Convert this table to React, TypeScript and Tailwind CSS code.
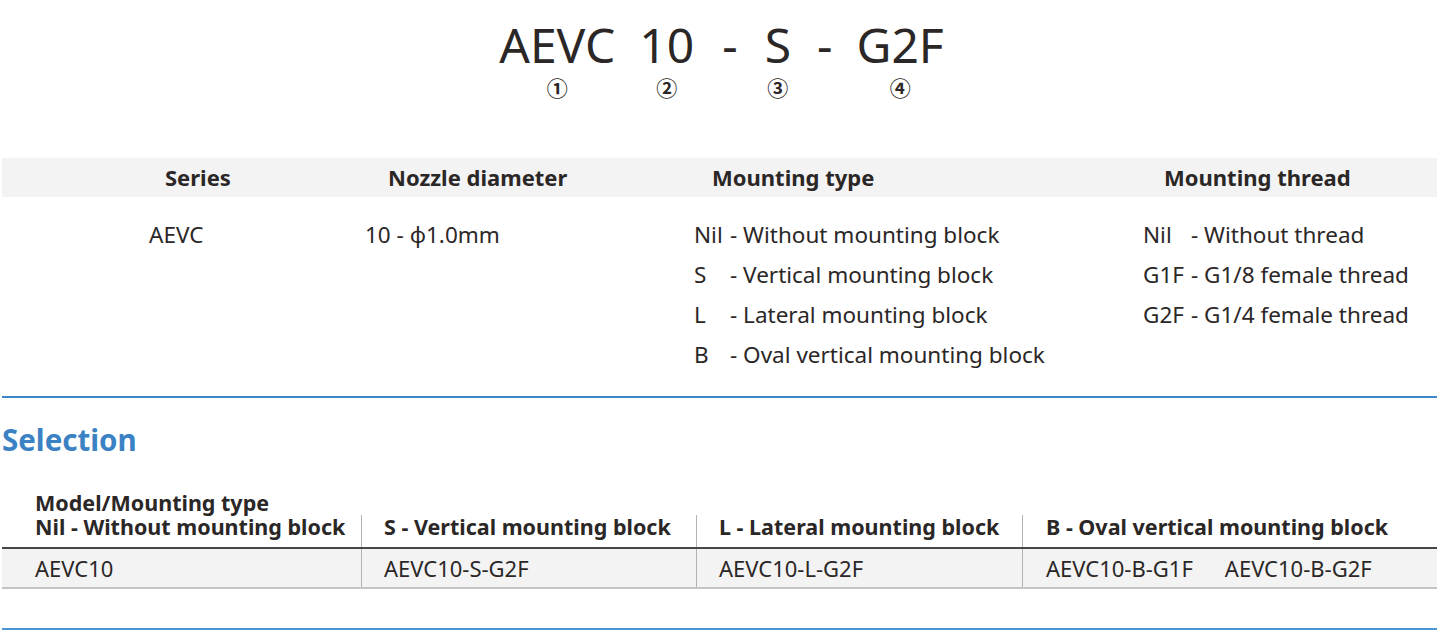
import React from "react";

const font = { fontFamily: '"Noto Sans", "Noto Sans CJK SC", sans-serif' };

const typeRows = [
  ["Nil", "- Without mounting block"],
  ["S", "- Vertical mounting block"],
  ["L", "- Lateral mounting block"],
  ["B", "- Oval vertical mounting block"],
];

const threadRows = [
  ["Nil", "- Without thread"],
  ["G1F", "- G1/8 female thread"],
  ["G2F", "- G1/4 female thread"],
];

const Token = ({ text, num }: { text: string; num: string }) => (
  <div className="flex flex-col items-center">
    <span className="text-[48px] leading-[56px]">{text}</span>
    <span className="text-[21px] leading-[28px] font-semibold font-['Noto_Sans_CJK_SC',sans-serif]">{num}</span>
  </div>
);

export default function App() {
  return (
    <div className="w-[1440px] h-[632px] bg-white text-[#2b2727] overflow-hidden" style={font}>
      {/* model code */}
      <div className="pt-[17px] flex justify-center items-start pl-[3px]">
        <Token text="AEVC" num="①" />
        <div className="w-[24px]" />
        <Token text="10" num="②" />
        <span className="text-[48px] leading-[56px] ml-[28px] mr-[27px]">-</span>
        <Token text="S" num="③" />
        <span className="text-[48px] leading-[56px] ml-[26px] mr-[24px]">-</span>
        <Token text="G2F" num="④" />
      </div>

      <div className="pl-[2px] w-[1437px]">
        {/* ordering table */}
        <div className="mt-[57px] h-[39px] bg-[#f3f3f3] grid grid-cols-[340px_340px_440px_1fr] items-center text-[22px] font-bold">
          <div className="pl-[163px]">Series</div>
          <div className="pl-[46px]">Nozzle diameter</div>
          <div className="pl-[30px]">Mounting type</div>
          <div className="pl-[42px]">Mounting thread</div>
        </div>
        <div className="pt-[18px] grid grid-cols-[340px_340px_440px_1fr] text-[22.5px] leading-[40px]">
          <div className="pl-[147px]">AEVC</div>
          <div className="pl-[23px]">10 - ϕ1.0mm</div>
          <div className="pl-[12px]">
            {typeRows.map(([k, v]) => (
              <div key={k} className="flex">
                <span className="w-[36px]">{k}</span>
                <span>{v}</span>
              </div>
            ))}
          </div>
          <div className="pl-[21px]">
            {threadRows.map(([k, v]) => (
              <div key={k} className="flex">
                <span className="w-[48px]">{k}</span>
                <span>{v}</span>
              </div>
            ))}
          </div>
        </div>

        <div className="mt-[21px] h-[2px] bg-[#3d86c9]" />

        {/* selection */}
        <h2 className="mt-[22px] text-[29.5px] leading-[40px] font-bold text-[#3a82c4]">Selection</h2>

        <div className="mt-[31px] text-[21.5px] font-bold leading-[24px] pl-[33px]">Model/Mounting type</div>
        <div className="grid grid-cols-[359px_335px_326px_1fr] text-[21.5px] font-bold">
          <div className="h-[32px] pl-[33px] leading-[24px]">Nil - Without mounting block</div>
          <div className="h-[32px] pl-[22px] leading-[24px] border-l border-[#b3b3b3]">S - Vertical mounting block</div>
          <div className="h-[32px] pl-[22px] leading-[24px] border-l border-[#b3b3b3]">L - Lateral mounting block</div>
          <div className="h-[32px] pl-[23px] leading-[24px] border-l border-[#b3b3b3]">B - Oval vertical mounting block</div>
        </div>
        <div className="h-[2px] bg-[#4a4646]" />
        <div className="grid grid-cols-[359px_335px_326px_1fr] bg-[#f3f3f3] text-[22px] border-b-2 border-[#c4c4c4]">
          <div className="h-[38px] pl-[33px] leading-[38px]">AEVC10</div>
          <div className="h-[38px] pl-[22px] leading-[38px] border-l border-[#b3b3b3]">AEVC10-S-G2F</div>
          <div className="h-[38px] pl-[22px] leading-[38px] border-l border-[#b3b3b3]">AEVC10-L-G2F</div>
          <div className="h-[38px] pl-[23px] leading-[38px] border-l border-[#b3b3b3] flex gap-[32px]">
            <span>AEVC10-B-G1F</span>
            <span>AEVC10-B-G2F</span>
          </div>
        </div>

        <div className="mt-[39px] h-[2px] bg-[#4b94d6]" />
      </div>
    </div>
  );
}
